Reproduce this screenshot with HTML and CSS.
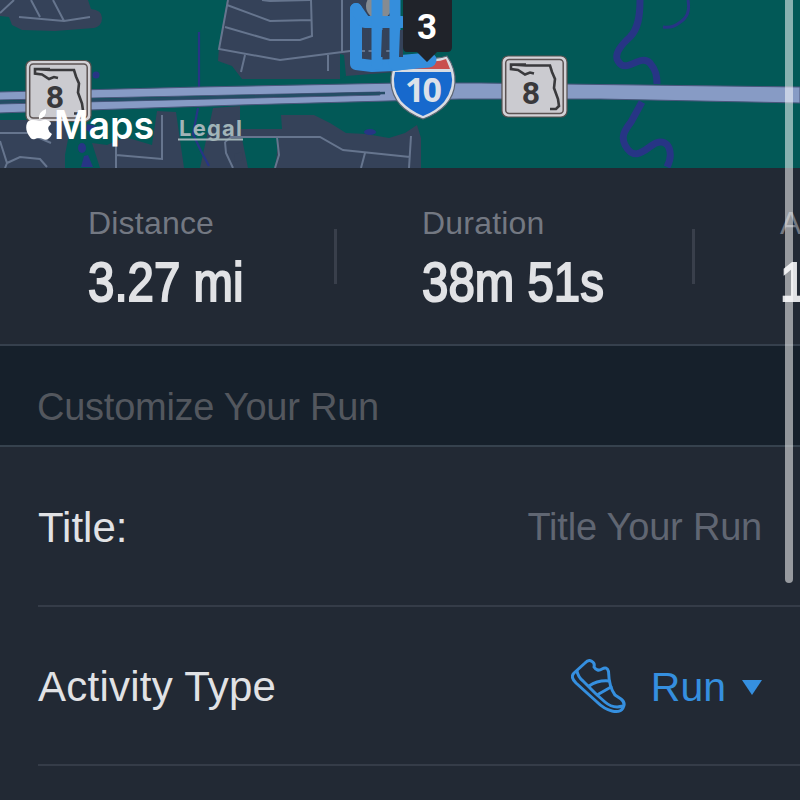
FILE: index.html
```
<!DOCTYPE html>
<html lang="en">
<head>
  <meta charset="UTF-8" />
  <meta name="viewport" content="width=device-width, initial-scale=1.0" />
  <title>Save Run</title>
  <link rel="stylesheet" href="styles.css">
</head>
<body>
  <main class="screen">
    <div class="map">
      <svg class="map-canvas" viewBox="0 0 800 168" width="800" height="168">
        <defs>
          <!-- Florida state road sign, drawn around its top left corner -->
          <g id="state-road">
            <rect x="0" y="0" width="65" height="61" rx="6" fill="#d2d1d6" stroke="#57504f" stroke-width="1.2" />
            <rect x="3.7" y="3.5" width="57.5" height="54" rx="3.5" fill="#cbcbd0" stroke="#5c5353" stroke-width="1.5" />
            <path d="M24 8.5H9V13L16 14L23 18.5L28 16.5L32 17.5M9 8.5L24 9.5H48L50 16L53 23L52 32L56 43L57 50L54 53H48" fill="none" stroke="#3a3a3d" stroke-width="2.6" />
            <text class="sign-number" x="29" y="47.500">8</text>
          </g>
        </defs>
        <rect width="800" height="168" fill="#025957" />

        <!-- built-up areas -->
        <g fill="#354259">
          <path d="M0 0H88L91 9Q102 10 102 18Q102 26 94 28L55 31L22 30L12 25L9 17L0 16Z" />
          <path d="M227 0H396V72L346 76L340 79L242 79L232 66L218 61L219 47Z" />
          <path d="M0 120H66L70 129L65 155V168H0Z" />
          <path d="M92 143L107 145L125 137L152 145L157 111L176 112L184 168H100Z" />
          <path d="M213 108L240 106V129L248 168H200L205 145Z" />
          <path d="M281 115L314 115L330 123L346 133L366 134L389 138L405 133L417 125L421 138V168H275L279 137H240V129H282Z" />
          <path d="M234 154L243 152L242 160L235 162Z" />
        </g>
        <path d="M340 54L344 55L346 76L340 80Z" fill="#025957" />

        <!-- streets -->
        <g fill="none" stroke="#66758e" stroke-width="2">
          <path d="M0 13L14 0M31 0L40 17M53 0L64 21M19 17L64 21L90 17" />
          <path d="M228 0L219 49L280 60L350 51H396M227 5L270 21L311 20M225 27L270 40H300L312 36L311 0M262 0L270 1L310 0M342 0V53M245 55L241 72M328 55V71" />
          <path d="M0 133H28L51 143M0 141L7 163L20 157L40 159L47 167M162 115V159L116 155M116 145V168M7 163L5 168" />
          <path d="M225 142L231 137H320L343 150L410 157M225 142L226 153L233 168M277 137L279 155L275 168M365 153L361 168M411 136L409 168" />
        </g>

        <!-- water -->
        <g fill="none" stroke="#273585">
          <path d="M199 32V87M198 108L193 134L201 151L209 166" stroke-width="2.2" />
          <path d="M640 0C640 17 638 29 630 37C620 46 614 55 618 61C626 75 640 53 650 63C656 70 657 76 657 84M642 102L631 122C624 131 621 137 625 145C635 164 647 147 656 143C669 138 674 153 667 167" stroke-width="7" />
          <path d="M688 0C690 12 687 18 679 23C674 27 669 28 663 27" stroke-width="3" />
        </g>
        <g fill="#273585">
          <circle cx="96" cy="75" r="3.5" />
          <path d="M87 124L96 126L91 133L86 130Z" />
          <ellipse cx="82" cy="148" rx="4" ry="5" />
          <path d="M84 156L88 155L93 167H81Z" />
          <ellipse cx="370" cy="132" rx="6" ry="3" />
        </g>

        <!-- interstate -->
        <g fill="#879bc5" stroke="#4a567c" stroke-width="1">
          <path d="M-2 92L200 87L400 83H480L800 87V103L600 99H460L240 105L-2 113V104L380 95L380 92L-2 100Z" />
        </g>
        <path d="M-2 102L190 98L385 93" fill="none" stroke="#254c65" stroke-width="2.5" />

        <use href="#state-road" x="26" y="60.500" />
        <use href="#state-road" x="502" y="56" />

        <!-- I-10 shield -->
        <path d="M398 57Q411 61 422 54Q434 61 447 56Q456 69 455 83Q453 108 423 119Q393 108 391 83Q390 70 398 57Z" fill="#d9dce2" stroke="#5c6573" stroke-width="1.2" />
        <path d="M400 60Q412 63 422 58Q434 64 446 59L450 69H396Z" fill="#c94f4d" />
        <path d="M395 72H451Q455 87 444 102Q436 111 423 116Q409 110 401 101Q391 87 395 72Z" fill="#1769cd" />
        <text class="shield-number" x="422.500" y="102">10</text>

        <!-- run track -->
        <circle cx="379" cy="6" r="13" fill="#858b91" />
        <g fill="none" stroke="#358edc" stroke-linecap="round" stroke-linejoin="round">
          <path d="M356 9V64L372 66L394 65L429 60" stroke-width="12" />
          <path d="M356 9L365 22H402" stroke-width="12" />
          <path d="M377 -6V64M395 -6V65" stroke-width="11" />
          <path d="M396 63L429 60" stroke-width="15" />
        </g>
        <path d="M365 30H368.500V57H365ZM382 30H387L386 57H381ZM400 30H403V57H399Z" fill="#354259" />

        <!-- mile marker -->
        <path d="M403 0H452V47Q452 52 447 52H437L427 62L417 52H407Q403 52 403 47Z" fill="#20232a" />
        <text class="mile-number" x="427" y="39">3</text>

        <!-- Apple logo -->
        <path d="M46 109Q47 117 39 119Q38 112 46 109ZM39 121C42 121 44 118 49 121Q51 122 51 124Q45 129 52 134Q48 142 43 139Q39 137 35 139Q31 141 27 132C25 125 27 119 33 120Q36 120 39 121Z" fill="#fff" />
        <text class="maps-name" x="54" y="139" textLength="100" lengthAdjust="spacingAndGlyphs">Maps</text>
        <text class="legal" x="179" y="136" textLength="63">Legal</text>
        <path d="M178 139.500H243" stroke="#a1b4b8" stroke-width="2" />
      </svg>
    </div>

    <section class="stats">
      <div class="stat distance">
        <span class="stat-label">Distance</span>
        <span class="stat-value">3.27 mi</span>
      </div>
      <div class="stat duration">
        <span class="stat-label">Duration</span>
        <span class="stat-value">38m 51s</span>
      </div>
      <div class="stat pace">
        <span class="stat-label">Avg Pace</span>
        <span class="stat-value">11:52</span>
      </div>
    </section>

    <h2 class="section-title">Customize Your Run</h2>

    <section class="form">
      <div class="row">
        <label class="row-label" for="title">Title:</label>
        <input class="title-input" id="title" type="text" placeholder="Title Your Run">
      </div>
      <div class="row activity">
        <span class="row-label">Activity Type</span>
        <div class="activity-value">
          <svg class="shoe" viewBox="0 0 56 56" width="56" height="56">
            <path d="M3 14L14 4Q18 0 21 2.500Q24 4 23 8Q26 13 31 10Q36 7 37.500 12.500Q38 28 44 36L50 40Q55 44 52 49Q49 54 41 52Q33 50 26 43L5 24Q-1 18 3 14Z" />
            <path d="M6 12Q7 18 12 22L25 35L34 43Q42 50 52 47M18 27Q27 21 38 22M26 36L40 28" />
          </svg>
          <span class="activity-name">Run</span>
          <span class="arrow"></span>
        </div>
      </div>
      <div class="row next"></div>
    </section>

    <div class="scrollbar"></div>
  </main>
</body>
</html>
```

FILE: styles.css
```
* {
  box-sizing: border-box;
}

body {
  margin: 0;
  background: #222934;
  color: #e1e2e5;
  font-family: "Liberation Sans", Arial, sans-serif;
}

.screen {
  position: relative;
  width: 800px;
  height: 800px;
  overflow: hidden;
}

/* Map */
.map {
  height: 168px;
  border-bottom: 1px solid #222b3a;
}

.map-canvas {
  display: block;
}

.sign-number {
  fill: #39393c;
  font: bold 32px Roboto, sans-serif;
  text-anchor: middle;
}

.shield-number {
  fill: #dce1e9;
  font: bold 34px "Open Sans", sans-serif;
  letter-spacing: -2px;
  text-anchor: middle;
}

.mile-number {
  fill: #fff;
  font: bold 35px Roboto, sans-serif;
  text-anchor: middle;
}

.maps-name {
  fill: #fff;
  font: 600 39px Inter, sans-serif;
}

.legal {
  fill: #a1b4b8;
  font: bold 22px Inter, sans-serif;
}

/* Stats */
.stats {
  display: flex;
  height: 178px;
  padding: 37px 0 0 88px;
  border-bottom: 2px solid #36404d;
}

.stat {
  display: flex;
  flex-direction: column;
  flex-shrink: 0;
  white-space: nowrap;
}

.distance {
  width: 334px;
}

.duration {
  width: 358px;
}

/* thin divider between two stats */
.distance,
.duration {
  background: linear-gradient(#393f4b, #393f4b) no-repeat;
  background-size: 3px 55px;
}

.distance {
  background-position: 246px 24px;
}

.duration {
  background-position: 270px 24px;
}

.stat-label {
  color: #737882;
  font-size: 32px;
  line-height: 36px;
  letter-spacing: 0.2px;
}

.stat-value {
  font-size: 56px;
  line-height: 64px;
  margin-top: 9px;
  transform: scaleX(0.847);
  transform-origin: left;
  -webkit-text-stroke: 2px #e1e2e5;
}

/* Section heading */
.section-title {
  height: 101px;
  margin: 0;
  padding: 39px 37px 0;
  border-bottom: 2px solid #36424e;
  background: #16202b;
  color: #53575e;
  font-size: 38px;
  font-weight: normal;
  line-height: 44px;
  letter-spacing: -0.25px;
}

/* Form rows */
.form {
  padding-left: 38px;
}

.row {
  display: flex;
  align-items: center;
  justify-content: space-between;
  height: 159px;
  padding: 3px 38px 0 0;
  border-bottom: 2px solid #353c48;
}

.row:first-child {
  height: 160px;
}

.row-label {
  font-size: 42px;
}

.activity .row-label {
  letter-spacing: 0.25px;
}

.title-input {
  width: 300px;
  padding: 0;
  border: 0;
  outline: 0;
  background: none;
  color: #e1e2e5;
  font: 38px "Liberation Sans", Arial, sans-serif;
  letter-spacing: -0.2px;
  text-align: right;
}

.title-input::placeholder {
  color: #606672;
}

.activity-value {
  display: flex;
  align-items: center;
  color: #358fdf;
}

.shoe {
  margin-right: 24px;
  fill: none;
  stroke: #358fdf;
  stroke-width: 3;
  stroke-linejoin: round;
  stroke-linecap: round;
}

.activity-name {
  font-size: 41px;
}

.arrow {
  margin-left: 16px;
  border: 10px solid transparent;
  border-top: 15px solid #358fdf;
  border-bottom: 0;
}

.next {
  border-bottom: 0;
}

.scrollbar {
  position: absolute;
  top: -10px;
  left: 785px;
  width: 8px;
  height: 593px;
  border-radius: 4px;
  background: rgba(255, 255, 255, 0.53);
}
```
